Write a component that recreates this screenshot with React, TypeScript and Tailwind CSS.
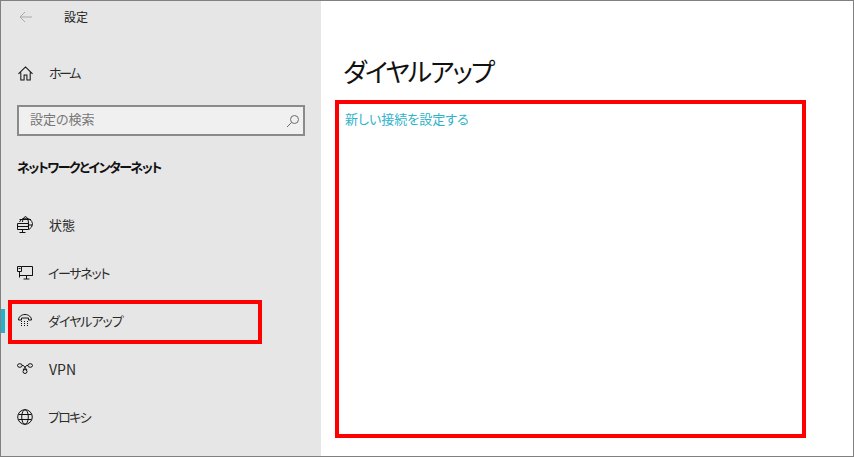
const font = "[font-family:'Noto_Sans_CJK_JP','Noto_Sans',sans-serif] [font-feature-settings:'palt']";

function BackIcon() {
  return (
    <svg width="13" height="12" viewBox="0 0 13 12" fill="none" stroke="#a8a8a8" strokeWidth="1">
      <path d="M1 6h12M6 1 1 6l5 5" />
    </svg>
  );
}

function HomeIcon() {
  return (
    <svg width="15" height="15" viewBox="0 0 16 16" fill="none" stroke="#111" strokeWidth="1.1">
      <path d="M.5 8.500 8 1l7.500 7.500M3 6.800v8.200h3.500V9.500h3V15H13V6.800" />
    </svg>
  );
}

function SearchIcon() {
  return (
    <svg width="14" height="14" viewBox="0 0 14 14" fill="none" stroke="#6b6b6b" strokeWidth="1">
      <circle cx="8.500" cy="5.500" r="4" />
      <path d="M5.500 8.500 1 13" />
    </svg>
  );
}

function StatusIcon() {
  return (
    <svg width="16" height="17" viewBox="0 0 16 17" fill="none" stroke="#111" strokeWidth="1">
      <path d="M2.500 6A7 7 0 0 1 15.500 7.500a7 7 0 0 1-3.500 6M5.500 6c0-2.500 1.300-5 3-5.500 1.800.5 3 3.500 3 7 0 1.200-.1 2.300-.4 3.500M2.500 3.500h11.500M11.500 9h4" />
      <path d="M.5 7.500h11v6H.5zM.5 10.500h11M5.500 13.500v3M2.500 16.500h6" />
    </svg>
  );
}

function EthernetIcon() {
  return (
    <svg width="16" height="14" viewBox="0 0 16 14" fill="none" stroke="#111" strokeWidth="1">
      <path d="M4.500.5h11v9h-11M.5.5h4v5h-4zM2.500 5.500v6M2.500 9.500h13M9.500 9.500v3.500M6.500 13h6" />
      <path d="M1.500 2.500h2" />
    </svg>
  );
}

function DialIcon() {
  return (
    <svg width="14" height="13" viewBox="0 0 14 13" fill="none" stroke="#111" strokeWidth="1" className="ml-px">
      <path d="M.5 6C.5 3 3.300.5 7 .5s6.500 2.500 6.500 5.500h-3V4h-7v2z" />
      <g fill="#111" stroke="none">
        <rect x="3" y="7" width="1" height="1" />
        <rect x="6" y="7" width="1" height="1" />
        <rect x="9" y="7" width="1" height="1" />
        <rect x="3" y="9" width="1" height="1" />
        <rect x="6" y="9" width="1" height="1" />
        <rect x="9" y="9" width="1" height="1" />
        <rect x="3" y="11" width="1" height="1" />
        <rect x="6" y="11" width="1" height="1" />
        <rect x="9" y="11" width="1" height="1" />
      </g>
    </svg>
  );
}

function VpnIcon() {
  return (
    <svg width="16" height="11" viewBox="0 0 16 11" fill="none" stroke="#111" strokeWidth="1">
      <ellipse cx="2.800" cy="2.500" rx="2.300" ry="1.800" />
      <ellipse cx="13.200" cy="2.500" rx="2.300" ry="1.800" />
      <circle cx="8" cy="8.500" r="2" />
      <path d="M5 2.500h1.500L10 7M11 2.500H9.500L6 7" />
    </svg>
  );
}

function ProxyIcon() {
  return (
    <svg width="16" height="16" viewBox="0 0 16 16" fill="none" stroke="#111" strokeWidth="1">
      <circle cx="8" cy="8" r="7.300" />
      <ellipse cx="8" cy="8" rx="3.300" ry="7.300" />
      <path d="M1.500 5.500h13M1.500 10.500h13" />
    </svg>
  );
}

function NavItem({ icon, label, className }: { icon: React.ReactNode; label: string; className: string }) {
  return (
    <div className="flex h-12 items-center pl-[16px]">
      <div className="w-[32px]">{icon}</div>
      <span className={`text-[#2b2b2b] ${className}`}>{label}</span>
    </div>
  );
}

export default function App() {
  return (
    <div className={`relative flex h-[457px] w-[854px] overflow-hidden border border-[#808080] bg-white ${font}`}>
      <aside className="flex h-full w-[320px] shrink-0 flex-col bg-[#e6e6e6]">
        <div className="flex h-[32px] items-center pl-[18px]">
          <BackIcon />
          <span className="ml-[32px] text-[12px] text-[#222]">設定</span>
        </div>

        <div className="mt-[16px] flex h-[48px] items-center pl-[17px]">
          <HomeIcon />
          <span className="ml-[16px] text-[13px] tracking-[-2.4px] text-[#2b2b2b]">ホーム</span>
        </div>

        <div className="mx-[16px] mt-[8px] flex h-[31px] items-center justify-between border-2 border-[#8a8a8a] bg-[#f0f0f0] pr-[3px] pl-[11px]">
          <span className="-mt-[3px] text-[13px] text-[#777]">設定の検索</span>
          <SearchIcon />
        </div>

        <div className="mt-[21px] pl-[16px] text-[13px] font-bold tracking-[-1.5px] text-[#111]">ネットワークとインターネット</div>

        <div className="mt-[24px] flex flex-col">
          <NavItem icon={<StatusIcon />} label="状態" className="text-[13px]" />
          <NavItem icon={<EthernetIcon />} label="イーサネット" className="-ml-px text-[13px] tracking-[-1.3px]" />
          <NavItem icon={<DialIcon />} label="ダイヤルアップ" className="-ml-px text-[13px] tracking-[-1px]" />
          <NavItem icon={<VpnIcon />} label="VPN" className="mt-[2px] text-[14px]" />
          <NavItem icon={<ProxyIcon />} label="プロキシ" className="-ml-px text-[13px] tracking-[-1.7px]" />
        </div>
      </aside>

      <main className="flex-1 pl-[22px]">
        <h1 className="mt-[48px] text-[26px] leading-[44px] font-normal tracking-[-1.9px] text-[#111]">ダイヤルアップ</h1>
        <a className="mt-[16px] block pl-[2px] text-[13px] text-[#2eb3cc]">新しい接続を設定する</a>
      </main>

      {/* selected marker */}
      <div className="absolute top-[308px] left-0 h-[24px] w-[4px] bg-[#27b1c9]" />
      {/* red annotations */}
      <div className="absolute top-[299px] left-[7px] h-[44px] w-[254px] border-4 border-[#ff0000]" />
      <div className="absolute top-[99px] left-[334px] h-[338px] w-[471px] border-4 border-[#ff0000]" />
    </div>
  );
}
